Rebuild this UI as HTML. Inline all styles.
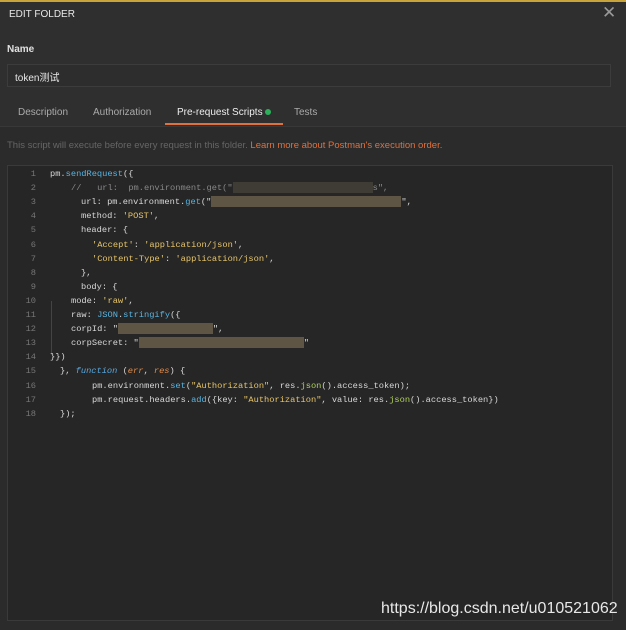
<!DOCTYPE html>
<html><head><meta charset="utf-8"><style>
body{margin:0;width:626px;height:630px;background:#2b2b2b;font-family:"Liberation Sans","Noto Sans CJK SC",sans-serif;position:relative;overflow:hidden;color:#ddd}
.top{position:absolute;left:0;top:0;width:626px;height:2px;background:#c9a43a}
.hd{position:absolute;left:0;top:2px;width:626px;height:124px;background:#2f2f2f}
.t{position:absolute;white-space:nowrap}
.inp{position:absolute;left:7px;top:64px;width:604px;height:23px;border:1px solid #3c3c3c;background:#2d2d2d;box-sizing:border-box}
.ed{position:absolute;left:7px;top:165px;width:606px;height:456px;border:1px solid #3a3a3a;background:#262626;box-sizing:border-box}
.code{position:absolute;left:0;top:167px;font-family:"Liberation Mono",monospace;font-size:8.7px;line-height:14.1px;color:#d8d8d8}
.ln{position:absolute;left:20px;width:16px;text-align:right;color:#777}
.c{position:absolute;white-space:pre}
.s{color:#e8c56a}.f{color:#59b4e0}.k{color:#59a8e0;font-style:italic}.p{color:#e08a4a;font-style:italic}.g{color:#b0d060}.cm{color:#888}
.b{display:inline-block;height:11px;vertical-align:middle;background:#5e5545}
</style></head><body>
<div class="top"></div><div class="hd"></div>
<div class="t" style="left:9px;top:9px;font-size:10px;color:#e8e8e8">EDIT FOLDER</div>
<div class="t" style="left:602px;top:3px;font-size:17px;color:#999">✕</div>
<div class="t" style="left:7px;top:44px;font-size:10px;font-weight:bold;color:#e0e0e0">Name</div>
<div class="inp"></div>
<div class="t" style="left:15px;top:69px;font-size:10px;color:#e8e8e8">token测试</div>
<div class="t" style="left:18px;top:107px;font-size:10px;color:#aaa">Description</div>
<div class="t" style="left:93px;top:107px;font-size:10px;color:#aaa">Authorization</div>
<div class="t" style="left:177px;top:107px;font-size:10px;color:#eee">Pre-request Scripts <span style="display:inline-block;width:6px;height:6px;border-radius:50%;background:#2cb15a"></span></div>
<div class="t" style="left:294px;top:107px;font-size:10px;color:#aaa">Tests</div>
<div style="position:absolute;left:165px;top:123px;width:118px;height:2px;background:#e0703e"></div>
<div style="position:absolute;left:0;top:126px;width:626px;height:1px;background:#383838"></div>
<div class="t" style="left:7px;top:140px;font-size:9.5px;color:#666">This script will execute before every request in this folder. <span style="color:#e0703e">Learn more about Postman's execution order.</span></div>
<div class="ed"></div>
<div style="position:absolute;left:51px;top:301px;width:1px;height:54px;background:#444"></div>
<div class="code">
<div class="ln" style="top:0">1</div><div class="c" style="left:50px;top:0">pm.<span class="f">sendRequest</span>({</div>
<div class="ln" style="top:14.1px">2</div><div class="c cm" style="left:71px;top:14.1px">//   url:  pm.environment.get("<span class="b" style="width:140px;background:#3f3c36"></span>s",</div>
<div class="ln" style="top:28.2px">3</div><div class="c" style="left:81px;top:28.2px">url: pm.environment.<span class="f">get</span>("<span class="b" style="width:190px"></span>",</div>
<div class="ln" style="top:42.3px">4</div><div class="c" style="left:81px;top:42.3px">method: <span class="s">'POST'</span>,</div>
<div class="ln" style="top:56.4px">5</div><div class="c" style="left:81px;top:56.4px">header: {</div>
<div class="ln" style="top:70.5px">6</div><div class="c" style="left:92px;top:70.5px"><span class="s">'Accept'</span>: <span class="s">'application/json'</span>,</div>
<div class="ln" style="top:84.6px">7</div><div class="c" style="left:92px;top:84.6px"><span class="s">'Content-Type'</span>: <span class="s">'application/json'</span>,</div>
<div class="ln" style="top:98.7px">8</div><div class="c" style="left:81px;top:98.7px">},</div>
<div class="ln" style="top:112.8px">9</div><div class="c" style="left:81px;top:112.8px">body: {</div>
<div class="ln" style="top:126.9px">10</div><div class="c" style="left:71px;top:126.9px">mode: <span class="s">'raw'</span>,</div>
<div class="ln" style="top:141px">11</div><div class="c" style="left:71px;top:141px">raw: <span class="f">JSON</span>.<span class="f">stringify</span>({</div>
<div class="ln" style="top:155.1px">12</div><div class="c" style="left:71px;top:155.1px">corpId: "<span class="b" style="width:95px"></span>",</div>
<div class="ln" style="top:169.2px">13</div><div class="c" style="left:71px;top:169.2px">corpSecret: "<span class="b" style="width:165px"></span>"</div>
<div class="ln" style="top:183.3px">14</div><div class="c" style="left:50px;top:183.3px">}})</div>
<div class="ln" style="top:197.4px">15</div><div class="c" style="left:60px;top:197.4px">}, <span class="k">function</span> (<span class="p">err</span>, <span class="p">res</span>) {</div>
<div class="ln" style="top:211.5px">16</div><div class="c" style="left:92px;top:211.5px">pm.environment.<span class="f">set</span>(<span class="s">"Authorization"</span>, res.<span class="g">json</span>().access_token);</div>
<div class="ln" style="top:225.6px">17</div><div class="c" style="left:92px;top:225.6px">pm.request.headers.<span class="f">add</span>({key: <span class="s">"Authorization"</span>, value: res.<span class="g">json</span>().access_token})</div>
<div class="ln" style="top:239.7px">18</div><div class="c" style="left:60px;top:239.7px">});</div>
</div>
<div class="t" style="left:381px;top:600px;font-size:16px;color:#e8e8e8">https://blog.csdn.net/u010521062</div>
</body></html>
